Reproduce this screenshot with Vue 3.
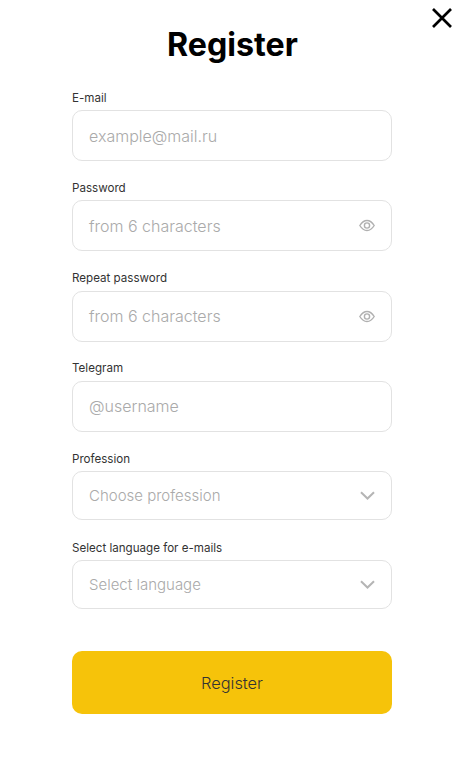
<script setup>
const fields = [
  { label: 'E-mail', placeholder: 'example@mail.ru' },
  { label: 'Password', placeholder: 'from 6 characters', icon: 'eye' },
  { label: 'Repeat password', placeholder: 'from 6 characters', icon: 'eye' },
  { label: 'Telegram', placeholder: '@username' },
  { label: 'Profession', placeholder: 'Choose profession', icon: 'chevron', select: true },
  { label: 'Select language for e-mails', placeholder: 'Select language', icon: 'chevron', select: true }
]
</script>

<template>
  <div class="modal">
    <button class="close" aria-label="Close">
      <svg width="22" height="22" viewBox="0 0 22 22">
        <path d="M2 2 L20 20 M20 2 L2 20" stroke="#000" stroke-width="2.7" fill="none" />
      </svg>
    </button>

    <h1 class="title">Register</h1>

    <form class="form" @submit.prevent>
      <div v-for="f in fields" :key="f.label" class="field" :class="{ select: f.select }">
        <label class="label">{{ f.label }}</label>
        <div class="control">
          <span class="placeholder">{{ f.placeholder }}</span>
          <svg v-if="f.icon === 'eye'" class="eye" width="16" height="13" viewBox="0 0 16 13">
            <path d="M.8 6.5 C3 3 5.4 1.5 8 1.5 C10.6 1.5 13 3 15.2 6.5 C13 10 10.6 11.5 8 11.5 C5.4 11.5 3 10 .8 6.5 Z" fill="none" stroke="#b0b0b0" stroke-width="1.4" />
            <circle cx="8" cy="6.5" r="2.6" fill="none" stroke="#b0b0b0" stroke-width="1.4" />
          </svg>
          <svg v-if="f.icon === 'chevron'" class="chevron" width="15" height="9" viewBox="0 0 15 9">
            <path d="M1 1.2 L7.5 7.5 L14 1.2" fill="none" stroke="#b5b5b5" stroke-width="2" />
          </svg>
        </div>
      </div>

      <button class="submit" type="submit">Register</button>
    </form>
  </div>
</template>

<style>
body {
  background: #fff;
}
</style>

<style scoped>
.modal {
  position: relative;
  width: 465px;
  height: 759px;
  box-sizing: border-box;
  padding-top: 26px;
  background: #fff;
  font-family: Inter, "Liberation Sans", sans-serif;
  overflow: hidden;
}

.close {
  position: absolute;
  top: 7px;
  right: 12px;
  width: 22px;
  height: 22px;
  padding: 0;
  border: 0;
  background: none;
}

.title {
  margin: 0 0 26.5px;
  text-align: center;
  font-size: 32.2px;
  line-height: 38px;
  font-weight: 700;
  color: #000;
}

.form {
  width: 320px;
  margin-left: 72px;
}

.field {
  margin-bottom: 19.8px;
}

.label {
  display: block;
  margin-bottom: 4.5px;
  font-size: 11.6px;
  line-height: 15px;
  color: #333;
}

.control {
  display: flex;
  align-items: center;
  justify-content: space-between;
  box-sizing: border-box;
  height: 51px;
  padding: 0 16px;
  border: 1px solid #e2e2e2;
  border-radius: 10px;
}

.select {
  margin-bottom: 20.5px;
}

.select .control {
  height: 49px;
}

.placeholder {
  font-size: 16px;
  font-weight: 300;
  color: #aaa;
}

.select .placeholder {
  font-size: 15px;
}

.submit {
  display: block;
  width: 100%;
  height: 63px;
  margin-top: 42px;
  border: 0;
  border-radius: 10px;
  background: #f6c30a;
  color: #333;
  font-family: inherit;
  font-size: 16.4px;
  font-weight: 300;
}
</style>
